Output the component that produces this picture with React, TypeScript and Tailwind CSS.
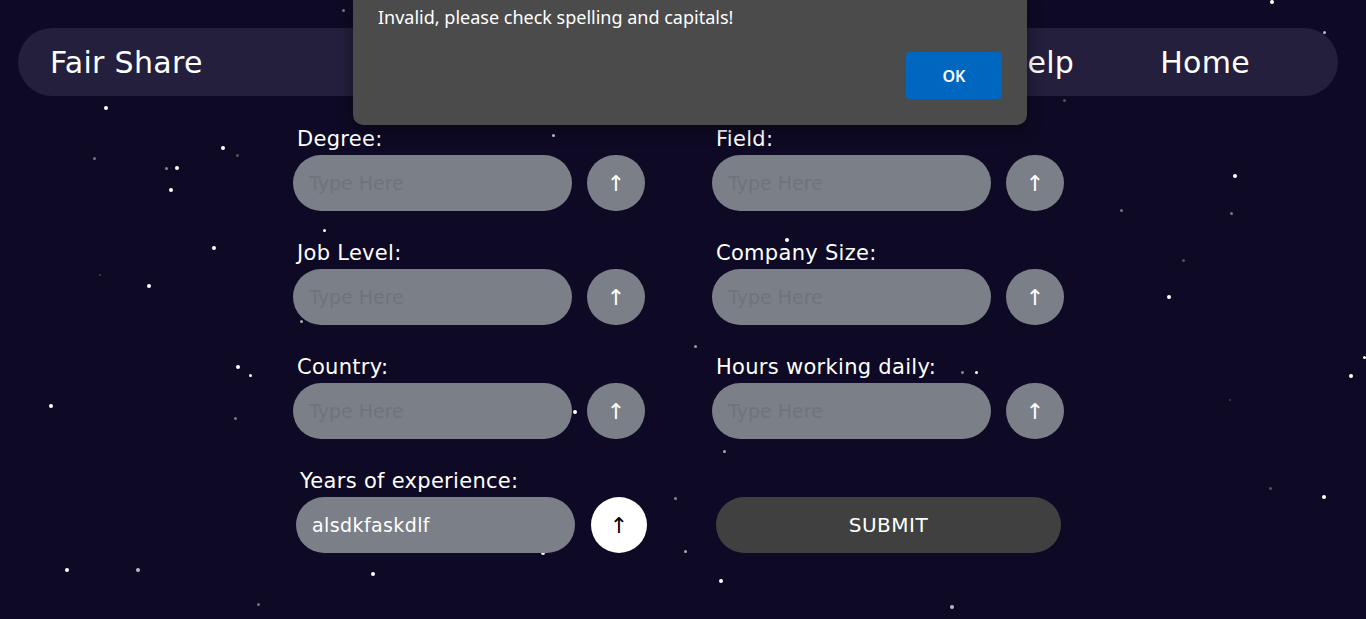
import React from "react";

const stars: [number, number, number, string][] = [
  [106, 108, 4, "#fff"], [223, 148, 4, "#fff"], [177, 168, 4, "#fff"], [166, 168, 3, "#888"], [171, 190, 4, "#fff"],
  [94, 158, 3, "#777"], [214, 248, 4, "#fff"], [149, 286, 4, "#fff"], [238, 367, 4, "#fff"], [250, 375, 3, "#fff"],
  [51, 406, 4, "#fff"], [235, 418, 3, "#777"], [67, 570, 4, "#fff"], [138, 570, 4, "#bbb"], [373, 574, 4, "#fff"],
  [258, 604, 3, "#777"], [324, 230, 3, "#fff"], [376, 166, 4, "#fff"], [465, 434, 4, "#fff"], [575, 412, 4, "#fff"],
  [553, 135, 3, "#ccc"], [543, 553, 4, "#fff"], [466, 503, 4, "#fff"], [399, 503, 4, "#ccc"], [721, 581, 4, "#fff"],
  [685, 551, 3, "#aaa"], [675, 498, 3, "#888"], [724, 451, 3, "#aaa"], [781, 400, 3, "#ddd"], [921, 413, 4, "#fff"],
  [870, 312, 3, "#bbb"], [978, 168, 4, "#fff"], [787, 240, 4, "#fff"], [695, 346, 3, "#999"], [1235, 176, 4, "#fff"],
  [1169, 297, 4, "#fff"], [1324, 497, 4, "#fff"], [1351, 376, 4, "#fff"], [1364, 357, 3, "#fff"], [1272, 2, 4, "#fff"],
  [1324, 32, 3, "#bbb"], [1231, 213, 3, "#777"], [1121, 210, 3, "#777"], [1183, 260, 3, "#555"], [1053, 402, 3, "#777"],
  [1064, 100, 3, "#555"], [952, 607, 4, "#bbb"], [943, 516, 4, "#fff"], [802, 503, 3, "#555"], [962, 372, 3, "#888"],
  [976, 372, 3, "#fff"], [301, 321, 3, "#aaa"], [383, 426, 3, "#999"], [571, 122, 3, "#888"], [237, 155, 3, "#555"],
  [343, 10, 3, "#777"], [1128, 90, 3, "#555"], [1270, 488, 3, "#555"], [1230, 400, 2, "#444"], [100, 275, 2, "#444"],
];

function Field({ label, value, className = "", white = false }: { label: string; value?: string; className?: string; white?: boolean }) {
  return (
    <div className={"flex flex-col " + className}>
      <div className="h-[28px] pl-[4px] text-[21px] leading-[24px] tracking-[0.3px] text-white">{label}</div>
      <div className="flex items-center gap-[15px]">
        <div className="flex h-[56px] w-[279px] shrink-0 items-center rounded-full bg-[#7b8088] px-[16px]">
          {value ? (
            <span className="text-[19px] tracking-[0.4px] text-white">{value}</span>
          ) : (
            <span className="text-[19px] text-[#6f747b]">Type Here</span>
          )}
        </div>
        <div
          className={
            "flex h-[56px] shrink-0 items-center justify-center rounded-full text-[22px] " +
            (white ? "ml-[1px] w-[56px] bg-white text-black" : "w-[58px] bg-[#7b8088] text-white")
          }
        >
          ↑
        </div>
      </div>
    </div>
  );
}

export default function App() {
  return (
    <div
      className="relative h-[619px] w-full overflow-hidden bg-[#0e0a25]"
      style={{ fontFamily: '"DejaVu Sans", "Liberation Sans", sans-serif' }}
    >
      {stars.map(([x, y, s, c], i) => (
        <div
          key={i}
          className="absolute rounded-full"
          style={{ left: x - s / 2, top: y - s / 2, width: s, height: s, background: c }}
        />
      ))}

      <nav className="relative ml-[18px] mr-[28px] mt-[28px] flex h-[68px] items-center justify-between rounded-full bg-[#231f3d] pl-[32px] pr-[88px] text-white">
        <span className="text-[30px] tracking-[0.3px]">Fair Share</span>
        <div className="flex items-center gap-[86px] text-[30px] tracking-[0.3px]">
          <span>Help</span>
          <span>Home</span>
        </div>
      </nav>

      <div className="relative ml-[293px] mt-[31px] grid grid-cols-[352px_352px] gap-x-[67px] gap-y-[30px]">
        <Field label="Degree:" />
        <Field label="Field:" />
        <Field label="Job Level:" />
        <Field label="Company Size:" />
        <Field label="Country:" />
        <Field label="Hours working daily:" />
        <Field label="Years of experience:" value="alsdkfaskdlf" className="ml-[3px]" white />
        <div className="flex flex-col pt-[28px]">
          <button className="ml-[4px] flex h-[56px] w-[345px] items-center justify-center rounded-full bg-[#404040] text-[20px] tracking-[0.5px] text-white">
            SUBMIT
          </button>
        </div>
      </div>

      <div
        className="absolute left-[353px] top-0 h-[125px] w-[674px] rounded-b-[10px] bg-[#4b4b4b] shadow-[0_4px_16px_rgba(0,0,0,0.4)]"
        style={{ fontFamily: '"Noto Sans", "Open Sans", sans-serif' }}
      >
        <div className="pl-[25px] pt-[5px] text-[18px] leading-[24px] text-white">
          Invalid, please check spelling and capitals!
        </div>
        <div className="flex justify-end pr-[25px] pt-[23px]">
          <button className="flex h-[47px] w-[96px] items-center justify-center rounded-[4px] bg-[#0067c0] text-[16px] font-semibold text-white">
            OK
          </button>
        </div>
      </div>
    </div>
  );
}
